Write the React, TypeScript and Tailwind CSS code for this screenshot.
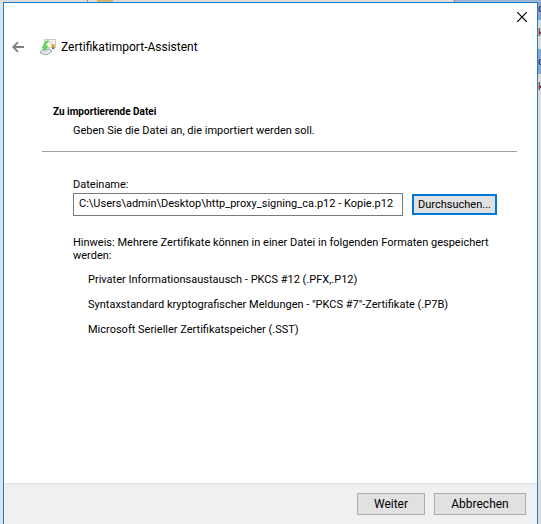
import { useState } from "react";

const formats = [
    "Privater Informationsaustausch - PKCS #12 (.PFX,.P12)",
    'Syntaxstandard kryptografischer Meldungen - "PKCS #7"-Zertifikate (.P7B)',
    "Microsoft Serieller Zertifikatspeicher (.SST)",
];

const BackArrow = () => (
    <svg width="12" height="12" viewBox="0 0 12 12" fill="none" aria-hidden="true">
        <path
            d="M6 1.2 1.2 6 6 10.8M1.2 6H12"
            stroke="#808080"
            strokeWidth="1.8"
        />
    </svg>
);

const CloseCross = () => (
    <svg width="10" height="10" viewBox="0 0 10 10" fill="none" aria-hidden="true">
        <path d="M0 0 10 10M10 0 0 10" stroke="#000" strokeWidth="1.2" />
    </svg>
);

const CertificateIcon = () => (
    <svg width="16" height="16" viewBox="0 0 16 16" aria-hidden="true">
        <path d="M4.5.5h11v8h-11z" fill="#f7f5ee" stroke="#cfcab8" />
        <path d="M8.5 3h5M10 5h2" stroke="#d5d9dc" />
        <path d="M12 7.5h2.5v3l-1.2-.8-1.3.8z" fill="#4a78b8" />
        <circle cx="13" cy="6.8" r="1.7" fill="#e69a1a" />
        <path
            d="M.5 12.5 3 10h6.5l2 1.5v1.3L7.5 15.5h-3L.5 14z"
            fill="#d4d7d8"
            stroke="#8f9598"
            strokeWidth=".8"
        />
        <path d="M2 12.8 5.5 14.3l4.5-2" fill="none" stroke="#f6f7f7" />
        <path
            d="M8.2 1.5C5.2 2 3.5 4.2 3.6 7.5L1.8 8l3 3.8 3-4.5H6C6 5 6.8 3.300 8.600 2.500z"
            fill="#5fdc5c"
            stroke="#3cb843"
            strokeWidth=".5"
        />
    </svg>
);

const footerButton =
    "h-[22px] border border-[#adadad] bg-[#e1e1e1] text-[12px] leading-4";

const App = () => {
    const [fileName, setFileName] = useState(
        "C:\\Users\\admin\\Desktop\\http_proxy_signing_ca.p12 - Kopie.p12"
    );

    return (
        <div className="flex min-h-screen flex-col bg-[#dcdcdc] font-['Roboto','Noto_Sans',sans-serif] text-[11px] leading-[13px] text-black">
            {/* sliver of the window behind the dialog */}
            <div className="flex h-0.5">
                <div className="w-[88px] border-r border-[#909090] bg-[#dcdcdc]" />
                <div className="ml-[9px] w-4 bg-[#c9b272]" />
                <div className="ml-auto w-[16%] border-l border-[#808080] bg-[#9fb4d0]" />
            </div>
            <div className="flex flex-1">
                <div className="w-[3px] bg-[#e2e2e2]" />
                <main className="flex min-w-0 flex-1 flex-col border-x border-t border-[#1a7fcf] bg-white">
                    <div className="flex justify-end pt-2 pr-[9px]">
                        <button
                            type="button"
                            aria-label="Schließen"
                            className="flex size-3 items-center justify-center"
                        >
                            <CloseCross />
                        </button>
                    </div>
                    <header className="mt-4 flex h-4 items-center pl-2">
                        <button type="button" aria-label="Zurück">
                            <BackArrow />
                        </button>
                        <div className="ml-4 flex items-center gap-[5px]">
                            <CertificateIcon />
                            <h1 className="text-[12px] leading-4">
                                Zertifikatimport-Assistent
                            </h1>
                        </div>
                    </header>

                    <section className="mr-5 ml-[38px] border-b border-[#a0a0a0] pt-[50px] pb-[14px] pl-[11px]">
                        <h2 className="text-[10px] font-bold">
                            Zu importierende Datei
                        </h2>
                        <p className="mt-1.5 pl-5">
                            Geben Sie die Datei an, die importiert werden soll.
                        </p>
                    </section>

                    <section className="mr-10 ml-[69px] pt-[26px]">
                        <label htmlFor="fileName">Dateiname:</label>
                        <div className="mt-0.5 flex items-center gap-[9px]">
                            <input
                                id="fileName"
                                type="text"
                                value={fileName}
                                onChange={(e) => setFileName(e.target.value)}
                                className="h-[23px] min-w-0 flex-1 border border-[#7a7a7a] pr-1 pb-0.5 pl-[5px]"
                            />
                            <button
                                type="button"
                                className="h-[21px] w-[85px] border-2 border-[#0078d7] bg-[#e1e1e1] whitespace-nowrap"
                            >
                                Durchsuchen...
                            </button>
                        </div>
                        <p className="mt-5">
                            Hinweis: Mehrere Zertifikate können in einer Datei in
                            folgenden Formaten gespeichert werden:
                        </p>
                        <ul className="mt-[11px] flex flex-col gap-3 pl-[15px]">
                            {formats.map((format) => (
                                <li key={format}>{format}</li>
                            ))}
                        </ul>
                    </section>

                    <footer className="mt-auto flex justify-end gap-[9px] border-t border-[#dfdfdf] bg-[#f0f0f0] pt-[9px] pr-[11px] pb-[9px]">
                        <button type="button" className={`${footerButton} w-[68px]`}>
                            Weiter
                        </button>
                        <button type="button" className={`${footerButton} w-[92px]`}>
                            Abbrechen
                        </button>
                    </footer>
                </main>
                {/* clipped text column of the window behind */}
                <div className="w-[3px] overflow-hidden bg-[#dcdcdc]" aria-hidden="true">
                    <div className="h-[18px] bg-[#8ba5c4] text-[#102a60]">o</div>
                    <div className="h-[29px] pt-1.5 text-[#7a1040]">k</div>
                    <div className="h-[25px] bg-[#8ba5c4] pt-1.5 text-[#102a60]">
                        o
                    </div>
                    <div className="pt-1.5 text-[#7a1040]">k</div>
                </div>
            </div>
        </div>
    );
};

export default App;
